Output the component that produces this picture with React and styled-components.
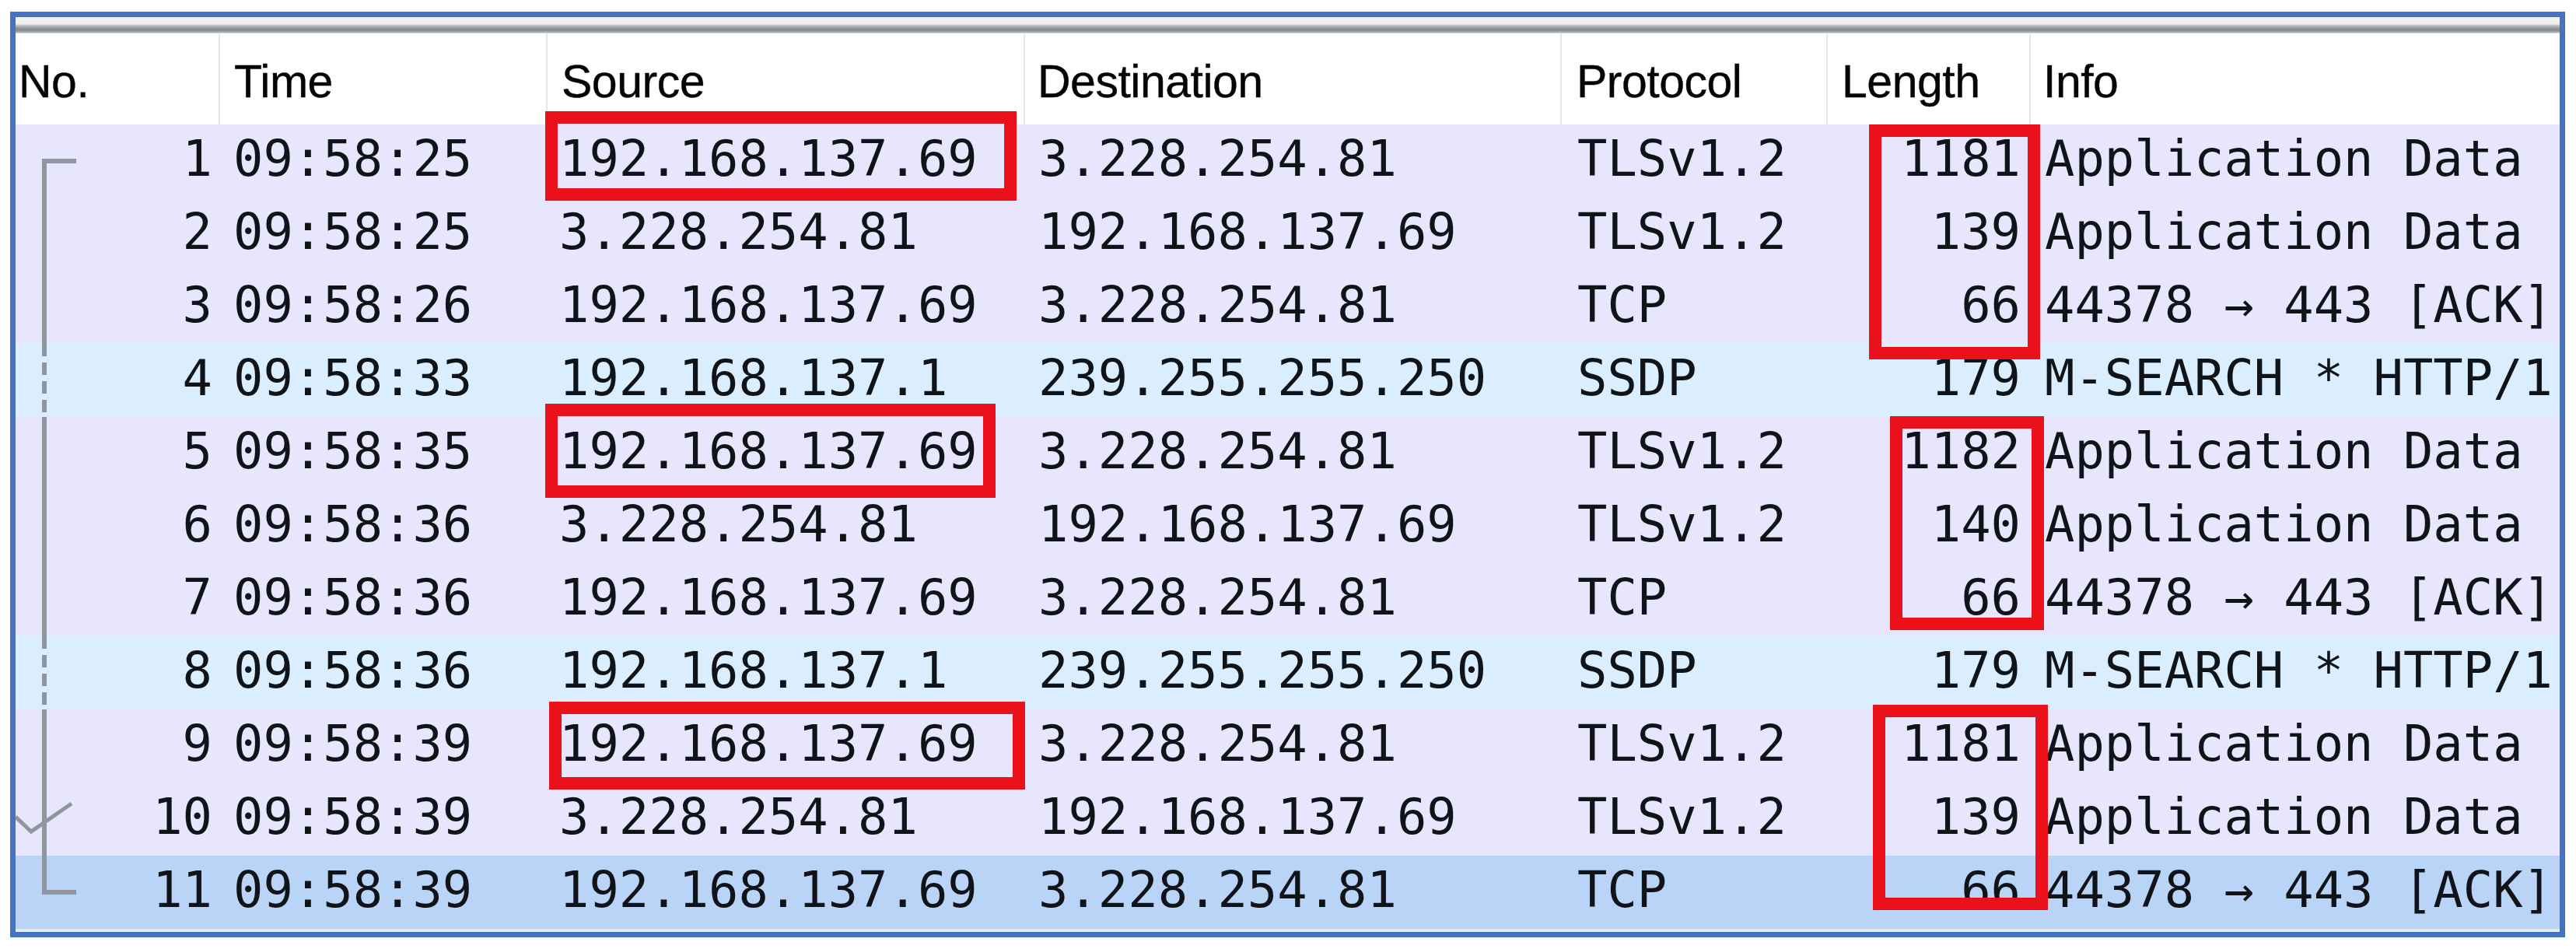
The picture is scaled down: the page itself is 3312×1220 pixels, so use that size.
import React from "react";
import styled, { createGlobalStyle } from "styled-components";

const GlobalStyle = createGlobalStyle`
  html, body { margin: 0; padding: 0; background: #ffffff; }
  #root { width: 3312px; height: 1220px; }
`;

const COLS = "263px 421px 614px 690px 342px 261px 1fr";

const ROW_BG = {
  tcp: "#e7e6fc",
  udp: "#daeeff",
  selected: "#bad4f8",
};

const Page = styled.div`
  width: 3312px;
  height: 1220px;
  box-sizing: border-box;
  padding: 15px 0 0 13px;
  background: #ffffff;
`;

const Frame = styled.div`
  position: relative;
  box-sizing: border-box;
  width: 3285px;
  height: 1190px;
  border: 7px solid #4472c4;
  overflow: hidden;
  display: flex;
  flex-direction: column;
  background: #ffffff;
`;

const TopBar = styled.div`
  height: 21px;
  flex-shrink: 0;
  background: linear-gradient(
    to bottom,
    #f2f2f2 0%,
    #eeeeee 42%,
    #bcbfc2 52%,
    #92979c 68%,
    #868b91 80%,
    #acafb3 92%,
    #e2e3e5 100%
  );
`;

const HeaderRow = styled.div`
  display: grid;
  grid-template-columns: ${COLS};
  height: 117px;
  flex-shrink: 0;
  background: #ffffff;
`;

const HeaderCell = styled.div`
  display: flex;
  align-items: center;
  box-sizing: border-box;
  padding: 6px 0 0 ${(p) => p.$pad}px;
  border-right: ${(p) => (p.$last ? "none" : "2px solid #e6e6e6")};
  font-family: "Liberation Sans", Arial, sans-serif;
  font-size: 59px;
  letter-spacing: -0.5px;
  color: #050505;
  -webkit-text-stroke: 0.4px #050505;
  white-space: nowrap;
  overflow: hidden;
`;

const Body = styled.div`
  display: flex;
  flex-direction: column;
  flex-shrink: 0;
`;

const Row = styled.div`
  display: grid;
  grid-template-columns: ${COLS};
  height: 94px;
  background: ${(p) => ROW_BG[p.$kind]};
`;

const Cell = styled.div`
  display: flex;
  align-items: center;
  justify-content: ${(p) => (p.$right ? "flex-end" : "flex-start")};
  box-sizing: border-box;
  padding: 0 ${(p) => p.$pr || 0}px 6px ${(p) => p.$pl || 0}px;
  font-family: "DejaVu Sans Mono", "Liberation Mono", monospace;
  font-size: 63.8px;
  color: #101317;
  white-space: pre;
  overflow: hidden;
`;

const NoCell = styled(Cell)`
  justify-content: space-between;
  padding-left: 0;
`;

const Tree = styled.svg`
  flex-shrink: 0;
  align-self: flex-start;
  width: 80px;
  height: 94px;
`;

const Footer = styled.div`
  height: 4px;
  flex-shrink: 0;
  background: linear-gradient(to bottom, #d4e3f8, #f4f7fc);
`;

const Annotation = styled.div`
  position: absolute;
  box-sizing: border-box;
  left: ${(p) => p.$x}px;
  top: ${(p) => p.$y}px;
  width: ${(p) => p.$w}px;
  height: ${(p) => p.$h}px;
  border: 16px solid #ea111b;
  pointer-events: none;
`;

const LINE = "#8f969d";

function TreeMark({ kind }) {
  return (
    <Tree viewBox="0 0 80 94">
      {kind === "start" && (
        <path d="M78 47 H37 V94" fill="none" stroke={LINE} strokeWidth="6" />
      )}
      {kind === "mid" && (
        <path d="M37 0 V94" fill="none" stroke={LINE} strokeWidth="6" />
      )}
      {kind === "dash" && (
        <path
          d="M37 0 V94"
          fill="none"
          stroke={LINE}
          strokeWidth="6"
          strokeDasharray="16 8"
        />
      )}
      {kind === "ack" && (
        <g fill="none" stroke={LINE}>
          <path d="M37 0 V94" strokeWidth="6" />
          <path d="M0 44 L20 63 L72 27" strokeWidth="5" />
        </g>
      )}
      {kind === "end" && (
        <path d="M37 0 V47 H78" fill="none" stroke={LINE} strokeWidth="6" />
      )}
    </Tree>
  );
}

const HEADERS = [
  { label: "No.", pad: 4 },
  { label: "Time", pad: 18 },
  { label: "Source", pad: 18 },
  { label: "Destination", pad: 16 },
  { label: "Protocol", pad: 19 },
  { label: "Length", pad: 18 },
  { label: "Info", pad: 16 },
];

const ACK = "44378 \u2192 443 [ACK]";
const APP = "Application Data";
const SSDP = "M-SEARCH * HTTP/1";
const A = "192.168.137.69";
const B = "3.228.254.81";

const ROWS = [
  { no: 1, time: "09:58:25", src: A, dst: B, proto: "TLSv1.2", len: 1181, info: APP, kind: "tcp", tree: "start" },
  { no: 2, time: "09:58:25", src: B, dst: A, proto: "TLSv1.2", len: 139, info: APP, kind: "tcp", tree: "mid" },
  { no: 3, time: "09:58:26", src: A, dst: B, proto: "TCP", len: 66, info: ACK, kind: "tcp", tree: "mid" },
  { no: 4, time: "09:58:33", src: "192.168.137.1", dst: "239.255.255.250", proto: "SSDP", len: 179, info: SSDP, kind: "udp", tree: "dash" },
  { no: 5, time: "09:58:35", src: A, dst: B, proto: "TLSv1.2", len: 1182, info: APP, kind: "tcp", tree: "mid" },
  { no: 6, time: "09:58:36", src: B, dst: A, proto: "TLSv1.2", len: 140, info: APP, kind: "tcp", tree: "mid" },
  { no: 7, time: "09:58:36", src: A, dst: B, proto: "TCP", len: 66, info: ACK, kind: "tcp", tree: "mid" },
  { no: 8, time: "09:58:36", src: "192.168.137.1", dst: "239.255.255.250", proto: "SSDP", len: 179, info: SSDP, kind: "udp", tree: "dash" },
  { no: 9, time: "09:58:39", src: A, dst: B, proto: "TLSv1.2", len: 1181, info: APP, kind: "tcp", tree: "mid" },
  { no: 10, time: "09:58:39", src: B, dst: A, proto: "TLSv1.2", len: 139, info: APP, kind: "tcp", tree: "ack" },
  { no: 11, time: "09:58:39", src: A, dst: B, proto: "TCP", len: 66, info: ACK, kind: "selected", tree: "end" },
];

const BOXES = [
  { x: 681, y: 121, w: 606, h: 115 },
  { x: 681, y: 497, w: 579, h: 121 },
  { x: 686, y: 880, w: 612, h: 113 },
  { x: 2383, y: 138, w: 220, h: 302 },
  { x: 2410, y: 513, w: 198, h: 275 },
  { x: 2388, y: 884, w: 225, h: 264 },
];

export default function App() {
  return (
    <>
      <GlobalStyle />
      <Page>
        <Frame>
          <TopBar />
          <HeaderRow>
            {HEADERS.map((h, i) => (
              <HeaderCell key={h.label} $pad={h.pad} $last={i === HEADERS.length - 1}>
                {h.label}
              </HeaderCell>
            ))}
          </HeaderRow>
          <Body>
            {ROWS.map((r) => (
              <Row key={r.no} $kind={r.kind}>
                <NoCell $pr={10}>
                  <TreeMark kind={r.tree} />
                  <span>{r.no}</span>
                </NoCell>
                <Cell $pl={17}>{r.time}</Cell>
                <Cell $pl={15}>{r.src}</Cell>
                <Cell $pl={17}>{r.dst}</Cell>
                <Cell $pl={20}>{r.proto}</Cell>
                <Cell $right $pr={13}>{r.len}</Cell>
                <Cell $pl={18}>{r.info}</Cell>
              </Row>
            ))}
          </Body>
          <Footer />
          {BOXES.map((b, i) => (
            <Annotation key={i} $x={b.x} $y={b.y} $w={b.w} $h={b.h} />
          ))}
        </Frame>
      </Page>
    </>
  );
}
